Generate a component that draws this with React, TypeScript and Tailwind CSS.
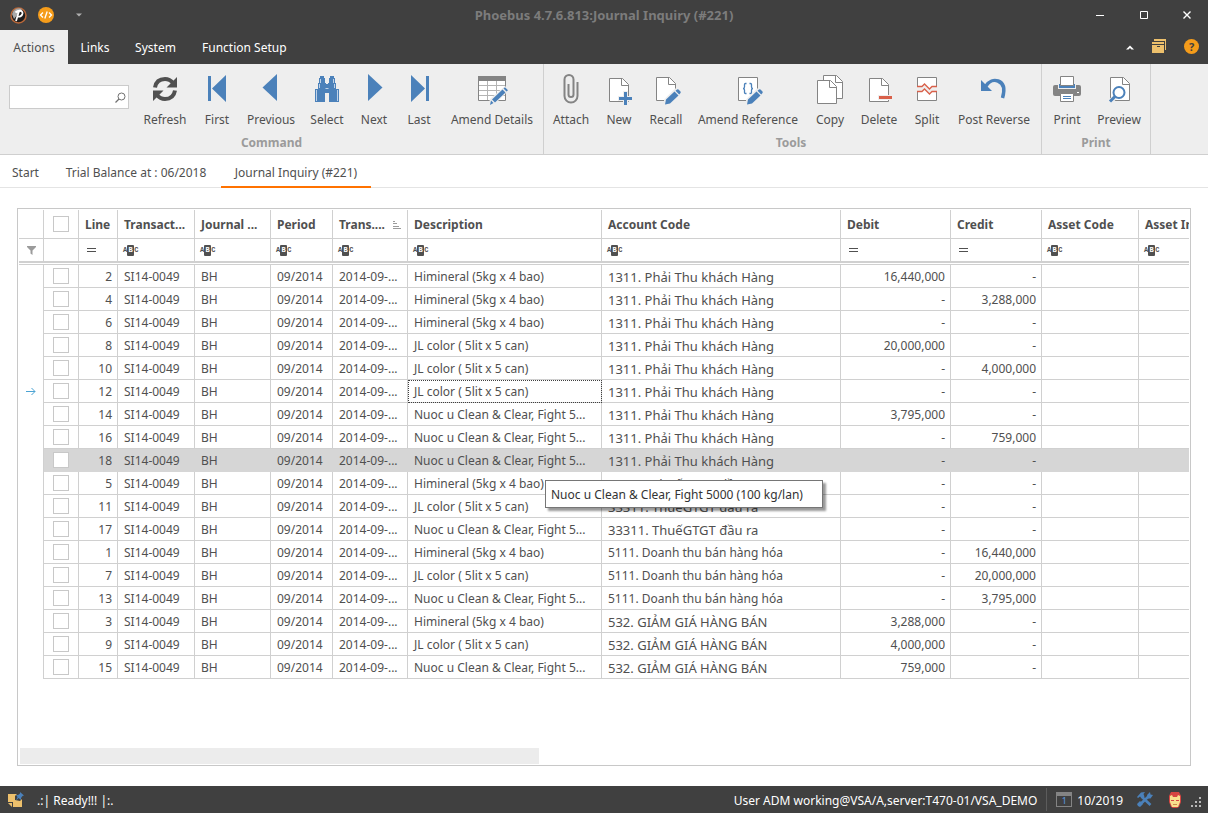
import type { ReactNode } from 'react'

interface Entry {
  line: number
  description: string
  account: string
  debit: string
  credit: string
}

interface RibbonItem {
  label: string
  width: string
  icon: ReactNode
}

const BLUE = '#4b81ba'
const GRAY = '#848484'
const RED = '#d9604a'

const HIMINERAL = 'Himineral (5kg x 4 bao)'
const JL_COLOR = 'JL color ( 5lit x 5 can)'
const NUOC = 'Nuoc u Clean & Clear, Fight 5...'

const RECEIVABLE = '1311. Phải Thu khách Hàng'
const VAT = '33311. ThuếGTGT đầu ra'
const REVENUE = '5111. Doanh thu bán hàng hóa'
const DISCOUNT = '532. GIẢM GIÁ HÀNG BÁN'

const entries: Entry[] = [
  { line: 2, description: HIMINERAL, account: RECEIVABLE, debit: '16,440,000', credit: '-' },
  { line: 4, description: HIMINERAL, account: RECEIVABLE, debit: '-', credit: '3,288,000' },
  { line: 6, description: HIMINERAL, account: RECEIVABLE, debit: '-', credit: '-' },
  { line: 8, description: JL_COLOR, account: RECEIVABLE, debit: '20,000,000', credit: '-' },
  { line: 10, description: JL_COLOR, account: RECEIVABLE, debit: '-', credit: '4,000,000' },
  { line: 12, description: JL_COLOR, account: RECEIVABLE, debit: '-', credit: '-' },
  { line: 14, description: NUOC, account: RECEIVABLE, debit: '3,795,000', credit: '-' },
  { line: 16, description: NUOC, account: RECEIVABLE, debit: '-', credit: '759,000' },
  { line: 18, description: NUOC, account: RECEIVABLE, debit: '-', credit: '-' },
  { line: 5, description: HIMINERAL, account: VAT, debit: '-', credit: '-' },
  { line: 11, description: JL_COLOR, account: VAT, debit: '-', credit: '-' },
  { line: 17, description: NUOC, account: VAT, debit: '-', credit: '-' },
  { line: 1, description: HIMINERAL, account: REVENUE, debit: '-', credit: '16,440,000' },
  { line: 7, description: JL_COLOR, account: REVENUE, debit: '-', credit: '20,000,000' },
  { line: 13, description: NUOC, account: REVENUE, debit: '-', credit: '3,795,000' },
  { line: 3, description: HIMINERAL, account: DISCOUNT, debit: '3,288,000', credit: '-' },
  { line: 9, description: JL_COLOR, account: DISCOUNT, debit: '4,000,000', credit: '-' },
  { line: 15, description: NUOC, account: DISCOUNT, debit: '759,000', credit: '-' },
]

const columns = [
  { title: 'Line', filter: 'equals' },
  { title: 'Transact...', filter: 'text' },
  { title: 'Journal ...', filter: 'text' },
  { title: 'Period', filter: 'text' },
  { title: 'Trans....', filter: 'text', sorted: true },
  { title: 'Description', filter: 'text' },
  { title: 'Account Code', filter: 'text' },
  { title: 'Debit', filter: 'equals' },
  { title: 'Credit', filter: 'equals' },
  { title: 'Asset Code', filter: 'text' },
  { title: 'Asset Indicator', filter: 'text' },
]

function Icon({ children }: { children: ReactNode }) {
  return (
    <svg width="32" height="32" viewBox="0 0 32 32" fill="none" aria-hidden="true">
      {children}
    </svg>
  )
}

function Page({ x, y }: { x: number; y: number }) {
  return (
    <g transform={`translate(${x} ${y})`} stroke={GRAY}>
      <path d="M.5.5h13l6 6v17H.5z" fill="#fff" />
      <path d="M12.5.5v7h7" />
    </g>
  )
}

function Pencil({ x, y }: { x: number; y: number }) {
  return (
    <g transform={`translate(${x} ${y})`}>
      <path d="M-1 16.500v-6L10 -.5h3l4.500 4.500v3L6 17z" fill="#eee" />
      <path d="M0 15.500l1-5 8.500-8 4 4-8.500 8zM10.500 1.800l1.500-1.300q.8-.5 1.500 0l2 2q.5.800 0 1.500l-1.300 1.500z" fill={BLUE} />
    </g>
  )
}

const commandItems: RibbonItem[] = [
  {
    label: 'Refresh',
    width: 'w-[58px]',
    icon: (
      <Icon>
        <path d="M6 13.500C7 7.500 11 5 16 5c3.500 0 6 1.500 8 4M26 16.500C25 22.500 21 25 16 25c-3.500 0-6-1.500-8-4" stroke="#505050" strokeWidth="4" />
        <path d="M28 3v10.500H17.500zM4 27V16.500h10.500z" fill="#505050" />
      </Icon>
    ),
  },
  {
    label: 'First',
    width: 'w-[46px]',
    icon: (
      <Icon>
        <path d="M7 2h3v25H7zM11 14.500L25 1v27z" fill={BLUE} />
      </Icon>
    ),
  },
  {
    label: 'Previous',
    width: 'w-[62px]',
    icon: (
      <Icon>
        <path d="M7.500 13.500L22 0v27z" fill={BLUE} />
      </Icon>
    ),
  },
  {
    label: 'Select',
    width: 'w-[50px]',
    icon: (
      <Icon>
        <path
          d="M9 2h4v2h1v5h1v1h2V9h1V4h1V2h4v2h1v5h1v6h3v13H18v-9h-4v9H4V15h3V9h1V4h1z"
          fill={BLUE}
        />
        <path d="M5.500 16v11M26.500 16v11M8.500 10v4M23.500 10v4M9.500 5v4M22.500 5v4M14.500 14.500h3" stroke="#bfd2e8" />
      </Icon>
    ),
  },
  {
    label: 'Next',
    width: 'w-[44px]',
    icon: (
      <Icon>
        <path d="M10 0l14.500 13.500L10 27z" fill={BLUE} />
      </Icon>
    ),
  },
  {
    label: 'Last',
    width: 'w-[46px]',
    icon: (
      <Icon>
        <path d="M8 1l14 13.500L8 28zM23 2h3v25h-3z" fill={BLUE} />
      </Icon>
    ),
  },
  {
    label: 'Amend Details',
    width: 'w-[100px]',
    icon: (
      <Icon>
        <path d="M2.500 2.500h27v24h-27z" fill="#fff" stroke={GRAY} />
        <path d="M2 2h28v5H2z" fill={GRAY} />
        <path d="M3 11.500h26M3 16.500h26M3 21.500h26M11.500 7v19M20.500 7v19" stroke="#b4b4b4" />
        <path d="M12 32l2-7L29 12l4 4-13 13z" fill="#eee" />
        <path d="M14 31l1-4.500 2.500 2.500zM16 25.500L26.500 15.500l3 3L19 28.500zM27.500 14.500l1.500-1.300 3 3-1.500 1.300z" fill={BLUE} />
      </Icon>
    ),
  },
]

const toolItems: RibbonItem[] = [
  {
    label: 'Attach',
    width: 'w-[52px]',
    icon: (
      <Icon>
        <path
          d="M18.500 8v12.500a2.500 2.500 0 0 1-5 0V10M18.500 8V5.500a4.500 4.500 0 0 0-9 0V22a6.500 6.500 0 0 0 13 0V8"
          stroke={GRAY}
          strokeWidth="2"
        />
      </Icon>
    ),
  },
  {
    label: 'New',
    width: 'w-[44px]',
    icon: (
      <Icon>
        <Page x={6} y={4} />
        <path d="M20 17h5v5h5v5h-5v5h-5v-5h-5v-5h5z" fill="#eee" />
        <path d="M21 18h3v5h5v3h-5v5h-3v-5h-5v-3h5z" fill={BLUE} />
      </Icon>
    ),
  },
  {
    label: 'Recall',
    width: 'w-[50px]',
    icon: (
      <Icon>
        <Page x={6} y={3} />
        <Pencil x={15} y={15} />
      </Icon>
    ),
  },
  {
    label: 'Amend Reference',
    width: 'w-[114px]',
    icon: (
      <Icon>
        <path d="M6.500 3.500h19v23h-19z" fill="#fff" stroke={GRAY} />
        <path d="M14.500 9.500h-1q-1 0-1 1v2.500q0 1.500-1.500 1.500 1.500 0 1.500 1.500v2.500q0 1 1 1h1M17.500 9.500h1q1 0 1 1v2.500q0 1.500 1.500 1.500-1.500 0-1.500 1.500v2.500q0 1-1 1h-1" stroke={BLUE} strokeWidth="1.300" />
        <Pencil x={15} y={15} />
      </Icon>
    ),
  },
  {
    label: 'Copy',
    width: 'w-[50px]',
    icon: (
      <Icon>
        <Page x={9} y={1} />
        <Page x={3} y={6} />
      </Icon>
    ),
  },
  {
    label: 'Delete',
    width: 'w-[48px]',
    icon: (
      <Icon>
        <Page x={6} y={4} />
        <path d="M15 21h15v5H15z" fill="#eee" />
        <path d="M16 22h13v3H16z" fill={RED} />
      </Icon>
    ),
  },
  {
    label: 'Split',
    width: 'w-[48px]',
    icon: (
      <Icon>
        <path d="M6.500 12.500v-9h19v9l-5 0-2.500 2.500-5-5-2.500 2.500zM6.500 17.500v9h19v-9h-5l-2.500 2.500-5-5-2.500 2.500z" fill="#fff" />
        <path d="M6.500 12.500v-9h19v9M6.500 17.500v9h19v-9" stroke={GRAY} />
        <path d="M6 12.500h5l2.500-2.500 5 5 2.500-2.500h5M6 17.500h5l2.500-2.500 5 5 2.500-2.500h5" stroke={RED} strokeWidth="1.300" />
      </Icon>
    ),
  },
  {
    label: 'Post Reverse',
    width: 'w-[86px]',
    icon: (
      <Icon>
        <path d="M8 12c3-5 8-6.500 12-5 5 1.800 7.500 7 4.500 17" stroke={BLUE} strokeWidth="3.500" />
        <path d="M3 6v11h11z" fill={BLUE} />
      </Icon>
    ),
  },
]

const printItems: RibbonItem[] = [
  {
    label: 'Print',
    width: 'w-[46px]',
    icon: (
      <Icon>
        <path d="M4 11h24q2 0 2 2v7q0 2-2 2H4q-2 0-2-2v-7q0-2 2-2z" fill={GRAY} />
        <path d="M7 9h18v6H7z" fill="#eee" />
        <path d="M8 10h16v4H8z" fill={BLUE} />
        <path d="M9.500 2.500h13v9h-13z" fill="#fff" stroke={GRAY} />
        <path d="M8 12h16v2H8z" fill={BLUE} />
        <path d="M9.500 19.500h13v8h-13z" fill="#fff" stroke={GRAY} />
        <path d="M12 22.500h8M12 24.500h8" stroke={BLUE} />
        <path d="M26 18.500h2" stroke="#fff" />
      </Icon>
    ),
  },
  {
    label: 'Preview',
    width: 'w-[58px]',
    icon: (
      <Icon>
        <Page x={7} y={3} />
        <circle cx="16" cy="19" r="7" fill="#fff" />
        <path d="M12 23l-5 5" stroke="#eee" strokeWidth="5" />
        <circle cx="16" cy="18.500" r="5.500" fill="#fff" stroke={BLUE} strokeWidth="2" />
        <path d="M12 22.500l-5 5" stroke={BLUE} strokeWidth="3" />
      </Icon>
    ),
  },
]

interface RibbonGroupProps {
  title: string
  items: RibbonItem[]
  padding: string
  children?: ReactNode
}

function RibbonGroup({ title, items, padding, children }: RibbonGroupProps) {
  return (
    <section className={`flex flex-col border-r border-[#cfcfcf] ${padding}`} aria-label={title}>
      <div className="flex">
        {children}
        {items.map((item) => (
          <button key={item.label} className={`flex flex-col items-center pt-2.5 ${item.width}`}>
            {item.icon}
            <span className="mt-[5px] leading-[18px] whitespace-nowrap">{item.label}</span>
          </button>
        ))}
      </div>
      <div className="mt-1.5 text-center font-bold leading-4 text-[#9b9b9b]">{title}</div>
    </section>
  )
}

function TitleBar() {
  return (
    <header className="grid h-[30px] grid-cols-[1fr_auto_1fr] items-center bg-[#404040]">
      <div className="flex items-center pl-2.5">
        <svg width="17" height="17" viewBox="0 0 17 17" role="img" aria-label="Phoebus">
          <circle cx="8.500" cy="8.500" r="7.500" fill="#1d1d1d" stroke="#b9683a" strokeWidth="1.500" />
          <path d="M2 7a7 7 0 0 1 10-5L4 12z" fill="#a9a9a9" />
          <path d="M9 4L6 14M5.500 5.500C8 3 13 3 12.500 6.500 12 9.500 9 10 7.500 9.500" fill="none" stroke="#fff" strokeWidth="1.800" />
        </svg>
        <button className="ml-[11px]" aria-label="Code">
          <svg width="16" height="16" viewBox="0 0 16 16" fill="none">
            <circle cx="8" cy="8" r="8" fill="#f59c1a" />
            <path d="M5 5.500L2.500 8 5 10.500M11 5.500L13.500 8 11 10.500M9.200 4.500l-2.400 7" stroke="#fff" strokeWidth="1.300" />
          </svg>
        </button>
        <button className="ml-[22px]" aria-label="Customize toolbar">
          <svg width="6" height="4" viewBox="0 0 6 4">
            <path d="M0 .5h6L3 3.500z" fill="#b0b0b0" />
          </svg>
        </button>
      </div>
      <h1 className="text-[13px] font-bold text-[#7c7c7c]">Phoebus 4.7.6.813:Journal Inquiry (#221)</h1>
      <div className="flex justify-end">
        <button className="flex w-11 justify-center" aria-label="Minimize">
          <svg width="10" height="10" viewBox="0 0 10 10">
            <path d="M1 5.500h8" stroke="#fff" />
          </svg>
        </button>
        <button className="flex w-11 justify-center" aria-label="Maximize">
          <svg width="10" height="10" viewBox="0 0 10 10">
            <path d="M1.500 1.500h7v7h-7z" fill="none" stroke="#fff" />
          </svg>
        </button>
        <button className="flex w-[42px] justify-center" aria-label="Close">
          <svg width="10" height="10" viewBox="0 0 10 10">
            <path d="M1.500 1.500l7 7M8.500 1.500l-7 7" stroke="#fff" strokeWidth="1.400" />
          </svg>
        </button>
      </div>
    </header>
  )
}

function MenuBar() {
  return (
    <nav className="flex h-[34px] items-stretch bg-[#404040] text-white">
      <button className="w-[68px] bg-[#eee] pt-0.5 text-[#505050]">Actions</button>
      <button className="w-[54px] pt-0.5">Links</button>
      <button className="w-[67px] pt-0.5">System</button>
      <button className="px-[13px] pt-0.5">Function Setup</button>
      <div className="ml-auto flex items-center gap-[18px] pr-[9px]">
        <button aria-label="Collapse ribbon">
          <svg width="8" height="5" viewBox="0 0 8 5">
            <path d="M0 4.500L4 .5l4 4H5.500L4 3 2.500 4.500z" fill="#fff" />
          </svg>
        </button>
        <button className="pb-0.5" aria-label="Windows">
          <svg width="14" height="14" viewBox="0 0 14 14" fill="#edc06c">
            <path d="M2 0h12v11h-1V2H2z" />
            <path d="M0 3h12v2H0zM0 6h12v8H0z" />
            <path d="M5 7h3v1H5z" fill="#404040" />
          </svg>
        </button>
        <button className="mb-0.5 size-[15px] rounded-full bg-[#f59c1a] text-[11px] font-bold leading-[15px] text-[#404040]" aria-label="Help">
          ?
        </button>
      </div>
    </nav>
  )
}

function Ribbon() {
  return (
    <div className="flex h-[91px] border-b border-[#cfcfcf] bg-[#eee]">
      <RibbonGroup title="Command" items={commandItems} padding="px-px">
        <div className="w-[135px] pt-[21px] pl-2">
          <label className="flex h-6 w-[120px] items-center border border-[#cbcbcb] bg-white pr-0.5">
            <input className="w-full min-w-0 px-1 outline-none" aria-label="Search commands" />
            <svg className="shrink-0" width="11" height="11" viewBox="0 0 11 11" fill="none">
              <circle cx="6.500" cy="4.500" r="3.500" stroke="#707070" />
              <path d="M4 7L.5 10.500" stroke="#707070" strokeWidth="1.300" />
            </svg>
          </label>
        </div>
      </RibbonGroup>
      <RibbonGroup title="Tools" items={toolItems} padding="pl-px pr-1" />
      <RibbonGroup title="Print" items={printItems} padding="px-0.5" />
    </div>
  )
}

function DocumentTabs() {
  return (
    <nav className="flex h-[33px] items-stretch border-b border-[#e4e4e4]">
      <button className="w-[51px] pt-[3px]">Start</button>
      <button className="w-[170px] pt-[3px]">Trial Balance at : 06/2018</button>
      <button className="-mb-px w-[150px] border-b-2 border-[#ff7200] pt-1">Journal Inquiry (#221)</button>
    </nav>
  )
}

function FilterGlyph({ kind, title }: { kind: string; title: string }) {
  if (kind === 'equals') {
    return (
      <button className="ml-2 block" aria-label={`Filter ${title} by value`}>
        <svg width="9" height="4" viewBox="0 0 9 4">
          <path d="M0 .5h9M0 3.500h9" stroke="#505050" />
        </svg>
      </button>
    )
  }
  return (
    <button
      className="ml-[5px] flex items-center font-['Liberation_Mono',monospace] text-[7px] font-bold leading-[11px]"
      aria-label={`Filter ${title} by text`}
    >
      <span>A</span>
      <span className="w-[7px] rounded-[1px] bg-[#505050] text-white">B</span>
      <span>C</span>
    </button>
  )
}

function CheckBox({ label }: { label: string }) {
  return (
    <input
      type="checkbox"
      aria-label={label}
      className="mx-auto block size-4 appearance-none border border-[#c8c8c8] bg-white"
    />
  )
}

function HeaderRows() {
  return (
    <thead>
      <tr className="h-[29px]">
        <th className="border-r border-b border-[#d0d0d0]" />
        <th className="border-r border-b border-[#d0d0d0]">
          <CheckBox label="Select all lines" />
        </th>
        {columns.map((col) => (
          <th key={col.title} className="border-r border-b border-[#d0d0d0] pt-0.5 pl-1.5 text-left font-bold whitespace-nowrap">
            <span className="flex items-center">
              {col.title}
              {col.sorted && (
                <svg className="ml-auto mr-1.5" width="8" height="8" viewBox="0 0 8 8">
                  <path d="M0 .5h2M0 2.500h4M0 5.500h6M0 7.500h8" stroke="#9b9b9b" />
                </svg>
              )}
            </span>
          </th>
        ))}
      </tr>
      <tr className="h-6">
        <td className="border-r border-b-2 border-[#d0d0d0]">
          <svg className="mx-auto" width="9" height="9" viewBox="0 0 9 9">
            <path d="M0 0h9v1L5.500 4.500V9l-2-1.500v-3L0 1z" fill="#9b9b9b" />
          </svg>
        </td>
        <td className="border-r border-b-2 border-[#d0d0d0]" />
        {columns.map((col) => (
          <td key={col.title} className="border-r border-b-2 border-[#d0d0d0]">
            <FilterGlyph kind={col.filter} title={col.title} />
          </td>
        ))}
      </tr>
      <tr className="h-0.5">
        <td colSpan={13} className="border-b border-[#d0d0d0]" />
      </tr>
    </thead>
  )
}

function EntryRow({ entry }: { entry: Entry }) {
  const hovered = entry.line === 18
  const focused = entry.line === 12
  const cell = hovered
    ? 'border-r border-b border-[#d6d6d6] bg-[#d6d6d6] whitespace-nowrap'
    : 'border-r border-b border-[#d0d0d0] whitespace-nowrap'
  const textCell = `${cell} pt-0.5 pl-1.5`
  const numberCell = `${cell} pt-0.5 pr-[5px] text-right`
  const large = entry.account !== REVENUE

  return (
    <tr className="h-[23px]">
      <td className="border-r border-[#d0d0d0]">
        {focused && (
          <svg className="mx-auto" width="10" height="9" viewBox="0 0 10 9" fill="none">
            <path d="M0 4.500h9M5.500 1L9 4.500 5.500 8" stroke="#4ba3d3" />
          </svg>
        )}
      </td>
      <td className={cell}>
        <CheckBox label={`Select line ${entry.line}`} />
      </td>
      <td className={numberCell}>{entry.line}</td>
      <td className={textCell}>SI14-0049</td>
      <td className={textCell}>BH</td>
      <td className={textCell}>09/2014</td>
      <td className={textCell}>2014-09-...</td>
      <td className={`${textCell} relative ${focused ? 'outline outline-dotted -outline-offset-1 outline-[#404040]' : ''}`}>
        {entry.description}
        {hovered && (
          <div
            role="tooltip"
            className="absolute top-[31px] left-[137px] z-10 flex h-7 w-[278px] items-center border border-[#767676] bg-white pt-0.5 pl-[5px] text-[#333] shadow-[3px_3px_2px_rgba(0,0,0,0.4)]"
          >
            Nuoc u Clean &amp; Clear, Fight 5000 (100 kg/lan)
          </div>
        )}
      </td>
      <td className={large ? `${textCell} text-[13px]` : textCell}>{entry.account}</td>
      <td className={numberCell}>{entry.debit}</td>
      <td className={numberCell}>{entry.credit}</td>
      <td className={cell} />
      <td className={cell} />
    </tr>
  )
}

function JournalGrid() {
  return (
    <main className="mx-[17px] my-5 flex min-w-0 flex-1 flex-col border border-[#c8c8c8] p-px">
      <div className="flex-1 overflow-hidden">
        <table className="w-[1217px] table-fixed border-separate border-spacing-0 leading-[18px]">
          <colgroup>
            <col className="w-[25px]" />
            <col className="w-[35px]" />
            <col className="w-[39px]" />
            <col className="w-[77px]" />
            <col className="w-[76px]" />
            <col className="w-[62px]" />
            <col className="w-[75px]" />
            <col className="w-[194px]" />
            <col className="w-[239px]" />
            <col className="w-[110px]" />
            <col className="w-[91px]" />
            <col className="w-[97px]" />
            <col className="w-[97px]" />
          </colgroup>
          <HeaderRows />
          <tbody>
            {entries.map((entry) => (
              <EntryRow key={entry.line} entry={entry} />
            ))}
          </tbody>
        </table>
      </div>
      <div className="px-px">
        <div className="h-4 w-4/9 bg-[#ececec]" />
      </div>
    </main>
  )
}

function StatusBar() {
  return (
    <footer className="flex h-[27px] items-center bg-[#404040] pl-2 pr-[5px] text-white">
      <svg width="16" height="16" viewBox="0 0 16 16" aria-hidden="true">
        <path d="M0 2h14v13H5v-5H0z" fill="#edc06c" />
        <path d="M0 11h4v4z" fill="#edc06c" />
        <path d="M7 8V4l3-3h5v5l-3 3z" fill="#404040" />
        <path d="M12 0l4 3.500-1.500.5-1.500 2v2L10.500 6 8 8.500 9.500 5 8 3h2l2-1.500z" fill={BLUE} />
      </svg>
      <span className="ml-[13px] pt-0.5">.:| Ready!!! |:.</span>
      <span className="ml-auto pt-0.5">User ADM working@VSA/A,server:T470-01/VSA_DEMO</span>
      <span className="ml-[9px] h-[23px] w-px bg-[#5c5c5c]" />
      <span className="ml-[9px] h-[15px] w-4 border border-t-4 border-[#848484] text-center text-[9px] leading-[10px] text-[#5b9be0]">1</span>
      <span className="ml-[5px] pt-0.5">10/2019</span>
      <svg className="ml-3.5" width="16" height="15" viewBox="0 0 16 15" fill="none" aria-hidden="true">
        <path d="M3 12.500L12 4M4.500 4.500L13.500 13" stroke={BLUE} strokeWidth="2.600" />
        <path d="M1 14l-1-2 3-3 3 3-3 3zM10 3l3-3 .5 2.500L16 3l-2.500 3.500H11z" fill={BLUE} />
        <path d="M0 5l4-4.500L8 0 6.500 2l1 2.500-2.500 2L3 4.500 1 6z" fill={BLUE} />
      </svg>
      <svg className="ml-4" width="12" height="16" viewBox="0 0 12 16" aria-hidden="true">
        <path d="M2 0h8l2 4v6l-2 5-2 1H4l-2-1-2-5V4z" fill="#d64541" />
        <path d="M1 4l2-1 1 2h4l1-2 2 1v6l-2 5H3l-2-5z" fill="#f8e08e" />
        <path d="M2 8h3v1H2zM7 8h3v1H7z" fill="#d64541" />
        <path d="M4 12h4v1H4z" fill="#c98f4a" />
      </svg>
      <svg className="mb-1 ml-2.5 self-end" width="12" height="12" viewBox="0 0 12 12" fill="#b8b8b8" aria-hidden="true">
        <path d="M8 0h2v2H8zM4 4h2v2H4zM8 4h2v2H8zM0 8h2v2H0zM4 8h2v2H4zM8 8h2v2H8z" />
      </svg>
    </footer>
  )
}

export default function App() {
  return (
    <div className="flex min-h-screen flex-col bg-white font-['Noto_Sans',sans-serif] text-[12px] leading-4 text-[#505050]">
      <TitleBar />
      <MenuBar />
      <Ribbon />
      <DocumentTabs />
      <JournalGrid />
      <StatusBar />
    </div>
  )
}
